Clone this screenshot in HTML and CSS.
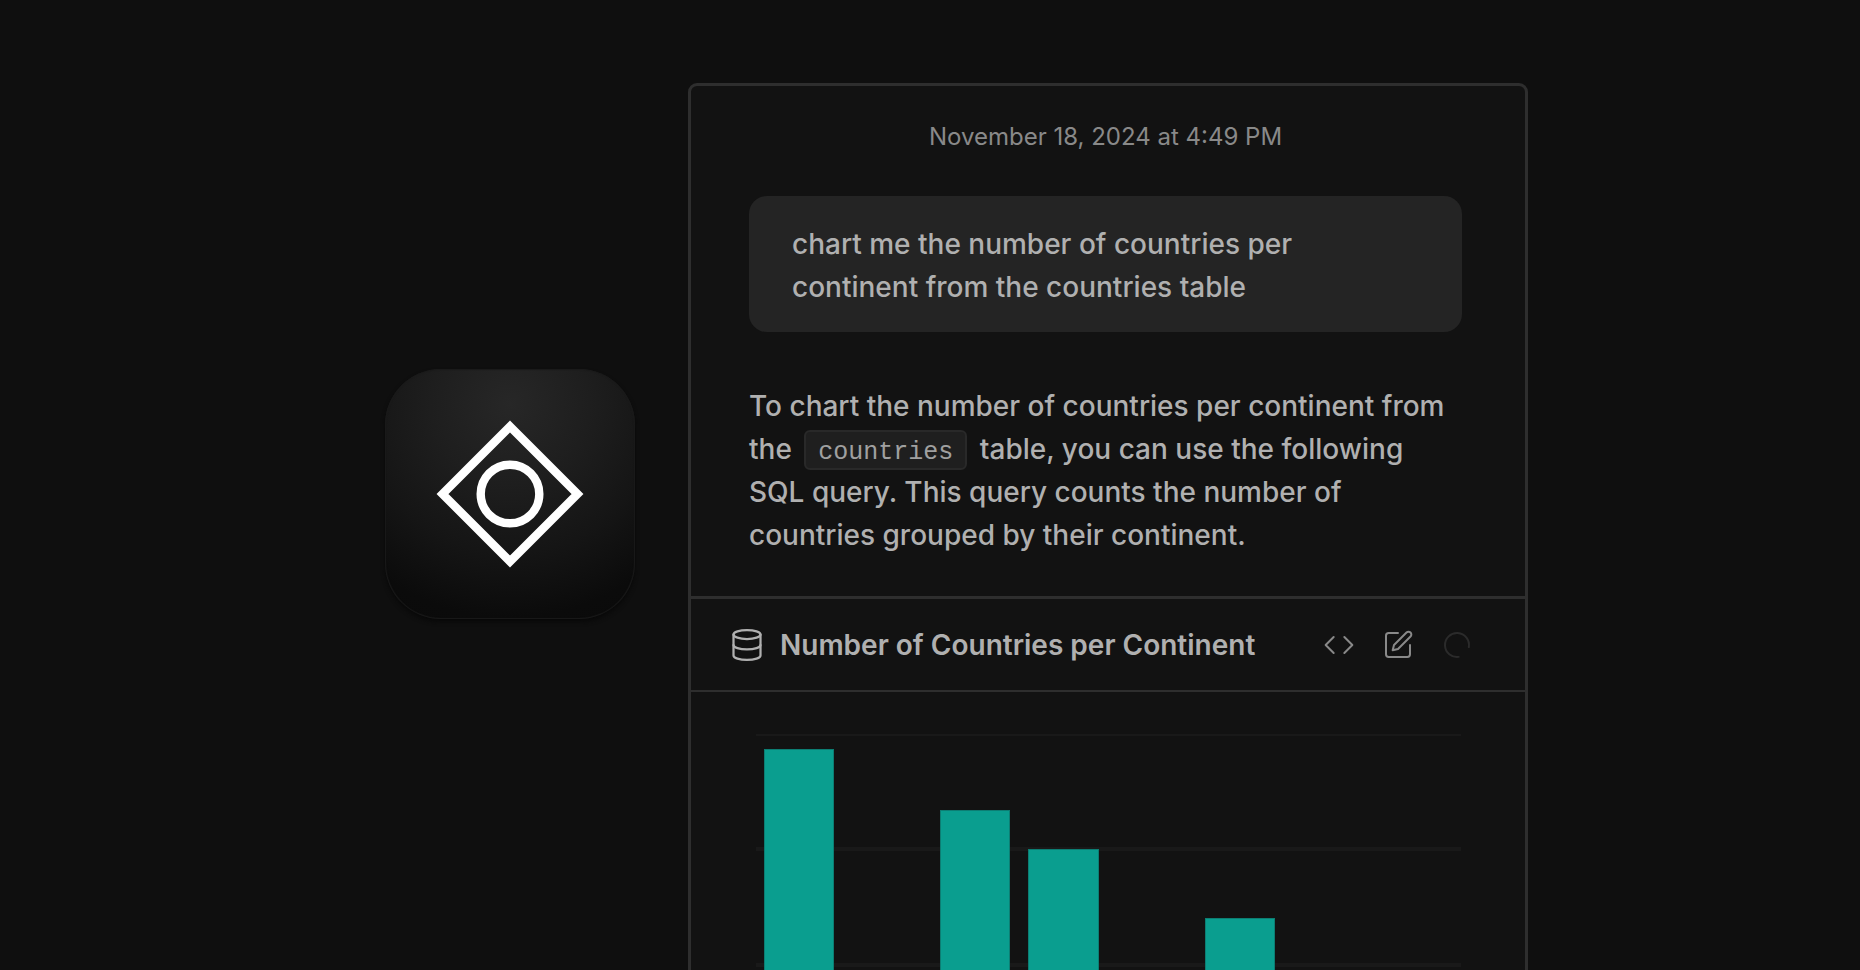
FILE: index.html
```html
<!DOCTYPE html>
<html lang="en">
<head>
<meta charset="utf-8">
<meta name="viewport" content="width=device-width, initial-scale=1">
<title>Number of Countries per Continent</title>
<link rel="stylesheet" href="styles.css">
</head>
<body>
<main class="stage">
  <div class="app-tile">
    <svg class="app-logo" viewBox="0 0 148 148" fill="none" stroke="#fff" stroke-width="8.400" aria-hidden="true">
      <path d="M74 6.5 141.500 74 74 141.500 6.500 74Z"/>
      <circle cx="74" cy="74" r="29.300"/>
    </svg>
  </div>

  <article class="panel">
    <section class="chat">
      <time class="chat-date" datetime="2024-11-18T16:49">November 18, 2024 at 4:49 PM</time>
      <p class="bubble">chart me the number of countries per<br>continent from the countries table</p>
      <p class="answer">To chart the number of countries per continent from<br>the <code class="chip">countries</code> table, you can use the following<br>SQL query. This query counts the number of<br>countries grouped by their continent.</p>
    </section>

    <header class="result-bar">
      <svg class="icon-db" viewBox="0 0 24 24" aria-hidden="true">
        <ellipse cx="12" cy="5" rx="9" ry="3"/>
        <path d="M3 5v14a9 3 0 0 0 18 0V5"/>
        <path d="M3 12a9 3 0 0 0 18 0"/>
      </svg>
      <h2 class="result-title">Number of Countries per Continent</h2>
      <div class="actions">
        <button class="action" type="button" aria-label="View code">
          <svg class="icon" viewBox="0 0 24 24" aria-hidden="true"><path d="m16 18 6-6-6-6M8 6l-6 6 6 6"/></svg>
        </button>
        <button class="action" type="button" aria-label="Edit">
          <svg class="icon" viewBox="0 0 24 24" aria-hidden="true">
            <path d="M12 3H5a2 2 0 0 0-2 2v14a2 2 0 0 0 2 2h14a2 2 0 0 0 2-2v-7"/>
            <path d="M18.375 2.625a2.121 2.121 0 1 1 3 3L12 15l-4 1 1-4Z"/>
          </svg>
        </button>
        <button class="action action-loading" type="button" aria-label="Loading">
          <svg class="icon" viewBox="0 0 24 24" aria-hidden="true"><path d="M21 12a9 9 0 1 1-6.219-8.560" transform="rotate(82 12 12)"/></svg>
        </button>
      </div>
    </header>

    <div class="chart">
      <div class="gridlines"><i></i><i></i><i></i><i></i></div>
      <div class="bars">
        <div class="slot"><div class="bar" style="height:446px"></div></div>
        <div class="slot"></div>
        <div class="slot"><div class="bar" style="height:385px"></div></div>
        <div class="slot"><div class="bar" style="height:346px"></div></div>
        <div class="slot"></div>
        <div class="slot"><div class="bar" style="height:277px"></div></div>
        <div class="slot"></div>
        <div class="slot"></div>
      </div>
    </div>
  </article>
</main>
</body>
</html>
```
FILE: styles.css
```css
* { box-sizing: border-box; }

body {
  margin: 0;
  height: 100vh;
  overflow: hidden;
  background: #0f0f0f;
  color: #b0b0b0;
  font-family: Inter, "Liberation Sans", sans-serif;
}

.stage {
  display: flex;
  justify-content: center;
  align-items: flex-start;
  gap: 53px;
  height: 100%;
  overflow: hidden;
  padding: 83px 24px 0 77px;
}

.app-tile {
  display: grid;
  place-items: center;
  flex: none;
  width: 250px;
  height: 250px;
  margin-top: 286px;
  border-radius: 56px;
  background: radial-gradient(circle at 50% 14%, #272727 0, #1e1e1e 32%, #151515 60%, #0b0b0b 86%, #0a0a0a 100%);
  box-shadow: inset 0 0 1px 1px #1a1a1a, 0 3px 4px #090909;
}

.app-logo { width: 148px; height: 148px; }

.panel {
  flex: 0 1 840px;
  min-width: 0;
  border: 3px solid #2e2e2e;
  border-radius: 9px;
  background: #121212;
}

.chat {
  display: flex;
  flex-direction: column;
  padding: 35px 63px 39px 58px;
}

.chat-date {
  align-self: center;
  color: #898989;
  font-size: 24px;
  line-height: 32px;
}

.bubble,
.answer {
  margin: 43px 0 0;
  font-size: 28px;
  font-weight: 500;
  line-height: 43px;
}

.bubble {
  padding: 27px 43px 23px;
  border-radius: 18px;
  background: #242424;
}

.answer { margin-top: 53px; }

.chip {
  display: inline-block;
  margin: 0 5px;
  padding: 7px 12px 1px;
  border: 2px solid #292929;
  border-radius: 6px;
  background: #1f1f1f;
  color: #a0a0a0;
  font-family: "Liberation Mono", monospace;
  font-size: 25px;
  font-weight: 400;
  line-height: 28px;
}

.result-bar {
  display: flex;
  align-items: center;
  gap: 15px;
  padding: 23px 52px 23px 38px;
  border-top: 3px solid #2e2e2e;
  border-bottom: 2px solid #2e2e2e;
}

.icon-db,
.icon {
  display: block;
  flex: none;
  fill: none;
  stroke: currentColor;
  stroke-width: 1.5;
  stroke-linecap: round;
  stroke-linejoin: round;
}

.icon-db { width: 36px; height: 36px; }
.icon { width: 32px; height: 32px; }

.result-title {
  flex: 1;
  margin: 0;
  padding-top: 2px;
  font-size: 28px;
  font-weight: 600;
  line-height: 43px;
}

.actions { display: flex; gap: 27px; }

.action {
  padding: 0;
  border: 0;
  background: none;
  color: #898989;
}

.action-loading { color: #2b2b2b; }

.chart {
  display: grid;
  margin: 42px 64px 48px 65px;
}

.gridlines,
.bars {
  grid-area: 1 / 1;
  display: grid;
}

.gridlines { grid-template-rows: 113px repeat(3, 116px); }
.gridlines i { border-top: 4px solid #191919; }
.gridlines i:first-child { border-top: 2px solid #191919; }

.bars { grid-template-columns: repeat(8, 1fr); }

.slot {
  display: flex;
  align-items: flex-end;
  padding: 0 10px 0 8px;
}

.bar {
  flex: 1;
  border: 1px solid #0c7e73;
  border-bottom: 0;
  background: #0a9e8f;
}
```
